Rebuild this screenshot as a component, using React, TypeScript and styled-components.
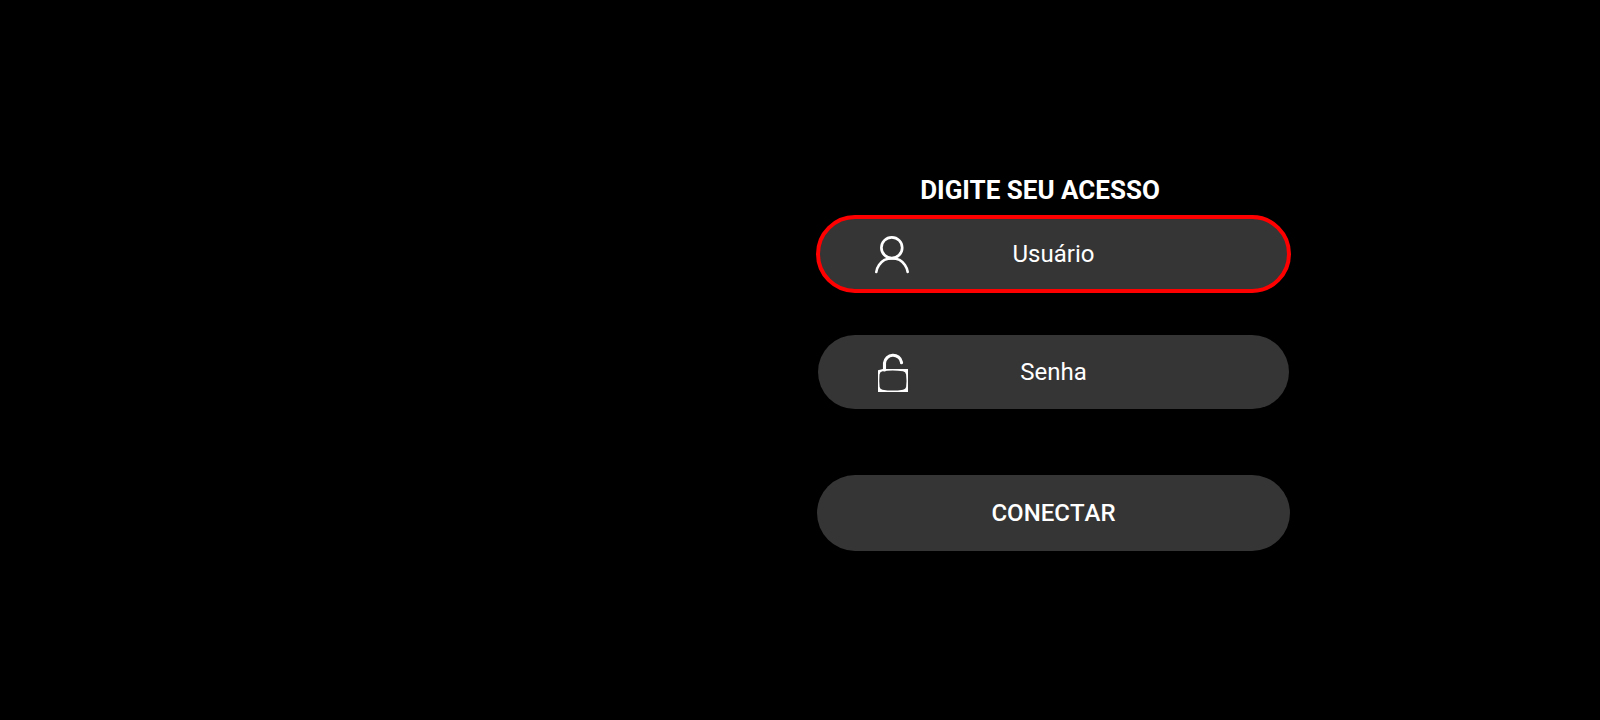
import React, { useState } from "react";
import styled, { createGlobalStyle } from "styled-components";

const GlobalStyle = createGlobalStyle`
  * {
    box-sizing: border-box;
  }

  body {
    margin: 0;
    background: #000;
    color: #fff;
    font-family: Roboto, "Liberation Sans", sans-serif;
  }
`;

const Page = styled.main`
  display: grid;
  grid-template-columns: minmax(0, 816fr) minmax(0, 475fr) minmax(0, 309fr);
  align-items: center;
  min-height: 100vh;
`;

const LoginForm = styled.form`
  grid-column: 2;
  display: flex;
  flex-direction: column;
`;

const Title = styled.h1`
  margin: 0 0 3px;
  padding-right: 27px;
  font-size: 26px;
  font-weight: 700;
  line-height: 44px;
  text-align: center;
  white-space: nowrap;
`;

const Fields = styled.div`
  display: flex;
  flex-direction: column;
  gap: 40px;
  margin-bottom: 63px;
`;

const Field = styled.label<{ $active: boolean }>`
  display: flex;
  align-items: center;
  height: 78px;
  padding: ${({ $active }) => ($active ? "0 92px 0 52px" : "0 94px 0 54px")};
  border: ${({ $active }) => ($active ? "4px solid #f00" : "2px solid transparent")};
  border-radius: 39px;
  background: #353535;
  background-clip: ${({ $active }) => ($active ? "border-box" : "padding-box")};
`;

const FieldIcon = styled.svg`
  flex: none;
  width: 40px;
  height: 40px;
  fill: none;
  stroke: #fff;
  stroke-linecap: round;
`;

const FieldInput = styled.input`
  flex: 1;
  min-width: 0;
  padding: 0;
  border: 0;
  outline: 0;
  background: transparent;
  color: #fff;
  font: 400 24px/32px Roboto, "Liberation Sans", sans-serif;
  text-align: center;

  &::placeholder {
    color: #fff;
    opacity: 1;
  }
`;

const SubmitButton = styled.button`
  height: 78px;
  padding: 0;
  border: 1px solid transparent;
  border-radius: 39px;
  background: #353535;
  background-clip: padding-box;
  color: #fff;
  font: 500 24px/32px Roboto, "Liberation Sans", sans-serif;
  font-kerning: none;
  cursor: pointer;
`;

function UserIcon() {
  return (
    <FieldIcon viewBox="0 0 40 40" aria-hidden="true">
      <circle cx="19.8" cy="13.7" r="10.4" strokeWidth="2.7" />
      <path
        d="M4.300 38C4.700 33.500 8.500 28 12.500 25.900Q16 24.400 20 24.400T27.500 25.900C31.500 28 35.200 33.500 35.700 38"
        strokeWidth="2.600"
      />
    </FieldIcon>
  );
}

function LockIcon() {
  return (
    <FieldIcon viewBox="0 0 40 40" aria-hidden="true">
      <path d="M12.500 18v-7a8.600 8.600 0 0 1 17-.800v.600" strokeWidth="3.100" />
      <path
        d="M6 18.200L11 17H36V40H6ZM10.500 19.200Q7.900 19.600 7.500 22.500Q7 28.500 7.600 35Q8 37.300 10.500 37.700Q20.500 39.400 31 37.700Q33.700 37.200 34.100 35Q34.900 28.500 34.100 22.500Q33.600 19.600 31 19.200Q20.500 18 10.500 19.200Z"
        fill="#fff"
        fillRule="evenodd"
        stroke="none"
      />
    </FieldIcon>
  );
}

type FieldName = "user" | "password";

export default function App() {
  const [active, setActive] = useState<FieldName>("user");

  return (
    <>
      <GlobalStyle />
      <Page>
        <LoginForm onSubmit={(event: React.FormEvent) => event.preventDefault()}>
          <Title>DIGITE SEU ACESSO</Title>
          <Fields>
            <Field $active={active === "user"} htmlFor="user">
              <UserIcon />
              <FieldInput
                id="user"
                type="text"
                placeholder="Usuário"
                aria-label="Usuário"
                autoComplete="username"
                onFocus={() => setActive("user")}
              />
            </Field>
            <Field $active={active === "password"} htmlFor="password">
              <LockIcon />
              <FieldInput
                id="password"
                type="password"
                placeholder="Senha"
                aria-label="Senha"
                autoComplete="current-password"
                onFocus={() => setActive("password")}
              />
            </Field>
          </Fields>
          <SubmitButton type="submit">CONECTAR</SubmitButton>
        </LoginForm>
      </Page>
    </>
  );
}
